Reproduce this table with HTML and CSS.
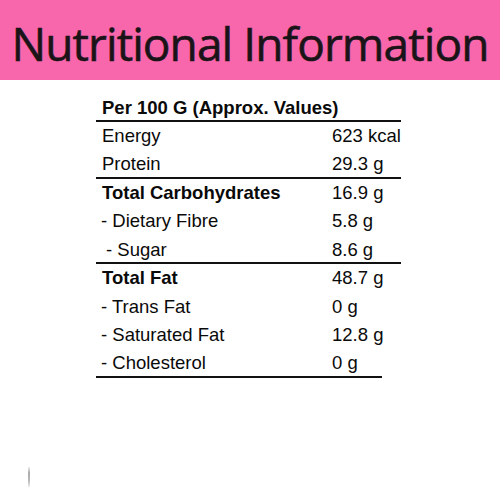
FILE: index.html
```html
<!DOCTYPE html>
<html lang="en">
<head>
  <meta charset="UTF-8">
  <meta name="viewport" content="width=device-width, initial-scale=1.0">
  <title>Nutritional Information</title>
  <link rel="stylesheet" href="styles.css">
</head>
<body>
  <!-- Pink title band -->
  <div class="banner">
    <h1>Nutritional Information</h1>
  </div>

  <!-- Facts table -->
  <div class="facts">
    <div class="row head ruled">
      <span class="label">Per 100 G (Approx. Values)</span>
    </div>
    <div class="row">
      <span class="label">Energy</span>
      <span class="value">623 kcal</span>
    </div>
    <div class="row ruled">
      <span class="label">Protein</span>
      <span class="value">29.3 g</span>
    </div>
    <div class="row strong">
      <span class="label">Total Carbohydrates</span>
      <span class="value">16.9 g</span>
    </div>
    <div class="row">
      <span class="label sub">- Dietary Fibre</span>
      <span class="value">5.8 g</span>
    </div>
    <div class="row ruled">
      <span class="label sub deep">- Sugar</span>
      <span class="value">8.6 g</span>
    </div>
    <div class="row strong">
      <span class="label">Total Fat</span>
      <span class="value">48.7 g</span>
    </div>
    <div class="row">
      <span class="label sub">- Trans Fat</span>
      <span class="value">0 g</span>
    </div>
    <div class="row">
      <span class="label sub">- Saturated Fat</span>
      <span class="value">12.8 g</span>
    </div>
    <div class="row last">
      <span class="label sub">- Cholesterol</span>
      <span class="value">0 g</span>
    </div>
    <div class="rule-short"></div>
  </div>

  <div class="tick"></div>
</body>
</html>
```

FILE: styles.css
```css
* {
  margin: 0;
  padding: 0;
  box-sizing: border-box;
}

body {
  background: #fff;
  font-family: "Liberation Sans", Arial, sans-serif;
  color: #0a0a0a;
  width: 500px;
  height: 500px;
  overflow: hidden;
}

.banner {
  background-color: #f866ab;
  height: 80px;
  display: flex;
  align-items: center;
  justify-content: center;
  padding-top: 6px;
}

.banner h1 {
  font-family: "Open Sans", sans-serif;
  font-weight: normal;
  font-size: 46px;
  letter-spacing: -0.9px;
  color: #1a1418;
  -webkit-text-stroke: 0.6px #1a1418;
  white-space: nowrap;
}

.facts {
  margin: 13.5px 0 0 96px;
  width: 305px;
}

.row {
  display: flex;
  height: 28.44px;
  font-size: 18.5px;
  line-height: 27px;
}

.row.ruled {
  border-bottom: 2px solid #111;
}

.row.last {
  height: 26.44px;
}

.label {
  width: 236px;
  padding-left: 6px;
  white-space: nowrap;
}

.label.sub {
  padding-left: 5px;
}

.label.deep {
  padding-left: 10px;
}

.head .label,
.strong .label {
  font-weight: bold;
}

.value {
  white-space: nowrap;
}

.rule-short {
  width: 286px;
  height: 2px;
  background: #111;
}

.tick {
  margin: 89px 0 0 28px;
  width: 2px;
  height: 20px;
  background: linear-gradient(#eee, #aaa 30%, #bbb 70%, #eee);
}
```
